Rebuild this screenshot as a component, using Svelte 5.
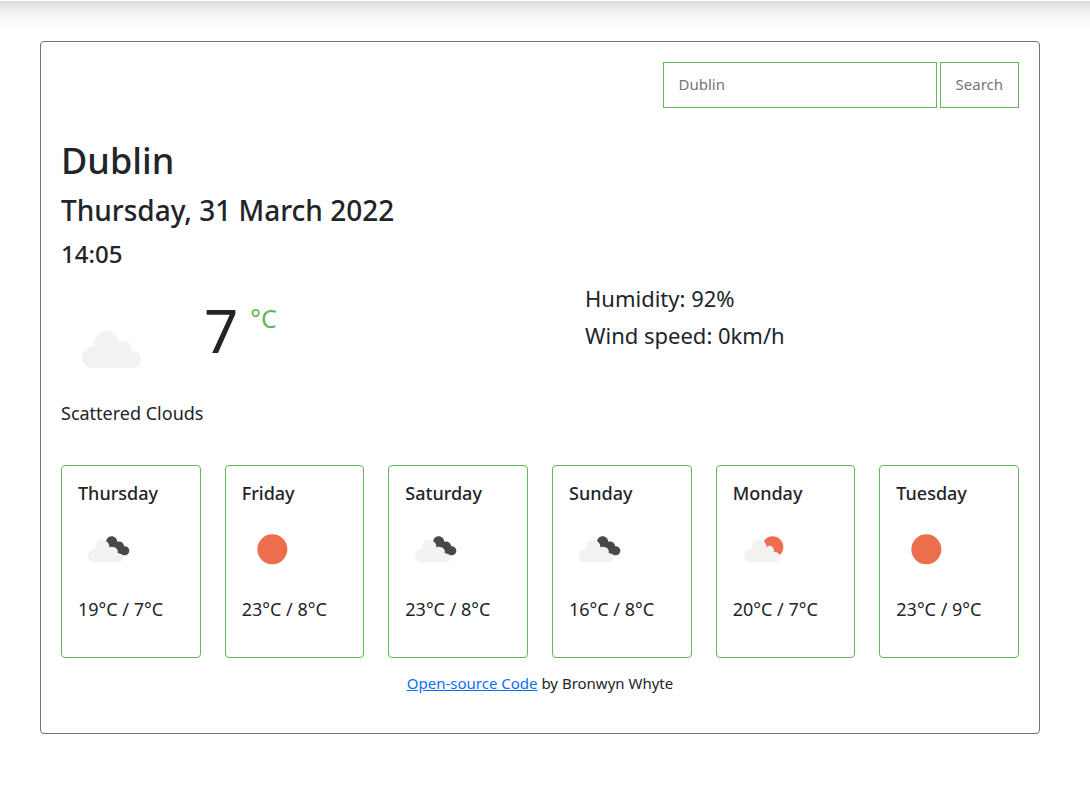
<script>
  const city = 'Dublin';
  let query = $state('');

  const forecast = [
    { day: 'Thursday', icon: 'broken', max: 19, min: 7 },
    { day: 'Friday', icon: 'clear', max: 23, min: 8 },
    { day: 'Saturday', icon: 'broken', max: 23, min: 8 },
    { day: 'Sunday', icon: 'broken', max: 16, min: 8 },
    { day: 'Monday', icon: 'few', max: 20, min: 7 },
    { day: 'Tuesday', icon: 'clear', max: 23, min: 9 }
  ];
</script>

{#snippet cloud()}
  <g fill="#f2f2f1">
    <circle cx="32" cy="79" r="32" />
    <circle cx="74" cy="37" r="37" />
    <circle cx="126" cy="51" r="21" />
    <circle cx="151" cy="85" r="26" />
    <path d="M32 47H74L126 59H151V111H32Z" />
  </g>
{/snippet}

<div class="page">
  <main class="app">
    <form class="search" onsubmit={(e) => e.preventDefault()}>
      <input type="text" aria-label="City" placeholder={city} bind:value={query} />
      <button type="submit">Search</button>
    </form>

    <h1>{city}</h1>
    <h2>Thursday, 31 March 2022</h2>
    <h3>14:05</h3>

    <section class="current">
      <div class="now">
        <svg class="now-icon" viewBox="0 0 300 300" aria-hidden="true">
          <g transform="translate(63 93)">{@render cloud()}</g>
        </svg>
        <span class="temperature">7</span>
        <span class="unit">°C</span>
      </div>
      <ul class="details">
        <li>Humidity: 92%</li>
        <li>Wind speed: 0km/h</li>
      </ul>
    </section>
    <p class="description">Scattered Clouds</p>

    <section class="forecast">
      {#each forecast as item}
        <article class="day">
          <h4>{item.day}</h4>
          <svg viewBox="0 0 180 180" aria-hidden="true">
            {#if item.icon === 'clear'}
              <circle cx="91" cy="91" r="45" fill="#ec6e4c" />
            {:else if item.icon === 'few'}
              <circle cx="119" cy="84" r="32" fill="#ec6e4c" />
              <g transform="translate(33 62) scale(0.61)">{@render cloud()}</g>
            {:else}
              <g transform="translate(29 62) scale(0.61)">{@render cloud()}</g>
              <path
                fill="#484849"
                d="M84 66C87 56 94 52 101 52C110 52 117 59 118 68C128 66 138 71 138 82C148 82 154 88 154 95C154 103 148 109 140 109C136 109 133 108 130 105L119 102C121 95 117 87 109 85C104 83 99 83 94 85C95 77 91 70 84 66Z"
              />
            {/if}
          </svg>
          <p>{item.max}°C / {item.min}°C</p>
        </article>
      {/each}
    </section>

    <footer><a href="#source">Open-source Code</a> by Bronwyn Whyte</footer>
  </main>
</div>

<style>
  :global(body) {
    margin: 0;
    background: #fff;
  }

  .page {
    box-sizing: border-box;
    min-height: 100vh;
    padding: 40px 50px 40px 40px;
    border-top: 1px solid #fff;
    background: linear-gradient(#dcdcdc, #e8e8e8 6px, #f7f7f7 15px, #fdfdfd 23px, #fff 30px) no-repeat;
    background-size: 100% 30px;
    color: #212529;
    font-family: 'Noto Sans', 'Open Sans', sans-serif;
  }

  .app {
    padding: 20px 20px 38px;
    border: 1px solid #727477;
    border-radius: 4px;
    background: #fff;
  }

  h1, h2, h3, h4, p, ul {
    margin: 0;
    padding: 0;
    font-weight: 500;
  }

  .search {
    display: flex;
    justify-content: flex-end;
    gap: 3px;
  }

  .search input,
  .search button {
    box-sizing: border-box;
    height: 46px;
    padding: 0 15px 3px;
    border: 1px solid #61b858;
    border-radius: 0;
    background: #fff;
    color: #757575;
    font: 400 15px 'Noto Sans', 'Open Sans', sans-serif;
  }

  .search input {
    width: 274px;
  }

  .search input::placeholder {
    color: #757575;
    opacity: 1;
  }

  h1 {
    margin-top: 29px;
    font-size: 36px;
    line-height: 48px;
  }

  h2 {
    margin-top: 6px;
    font-size: 28px;
    line-height: 38px;
  }

  h3 {
    margin-top: 8px;
    font-size: 24px;
    line-height: 34px;
  }

  .current {
    display: grid;
    grid-template-columns: 1fr 1fr;
    gap: 90px;
    margin-top: 9px;
  }

  .now {
    display: flex;
    align-items: flex-start;
    padding-top: 20px;
  }

  .now-icon {
    width: 100px;
    height: 100px;
  }

  .temperature {
    margin-left: 43px;
    font-size: 60px;
    line-height: 60px;
  }

  .unit {
    margin-left: 12px;
    color: #61b858;
    font-size: 25px;
    line-height: 36px;
  }

  .details {
    list-style: none;
    font-size: 22px;
    font-weight: 400;
    line-height: 37px;
  }

  p {
    font-size: 18px;
    font-weight: 400;
    line-height: 24px;
  }

  .description {
    margin-top: 1px;
  }

  .forecast {
    display: grid;
    grid-template-columns: repeat(6, 1fr);
    gap: 24px;
    margin-top: 40px;
  }

  .day {
    padding: 15px 16px 36px;
    border: 1px solid #61b858;
    border-radius: 4px;
  }

  .day h4 {
    font-size: 18px;
    line-height: 24px;
  }

  .day svg {
    display: block;
    width: 60px;
    height: 60px;
    margin: 14px 0 18px;
  }

  footer {
    margin-top: 13px;
    font-size: 15px;
    line-height: 24px;
    text-align: center;
  }

  footer a {
    color: #0d6efd;
  }
</style>
